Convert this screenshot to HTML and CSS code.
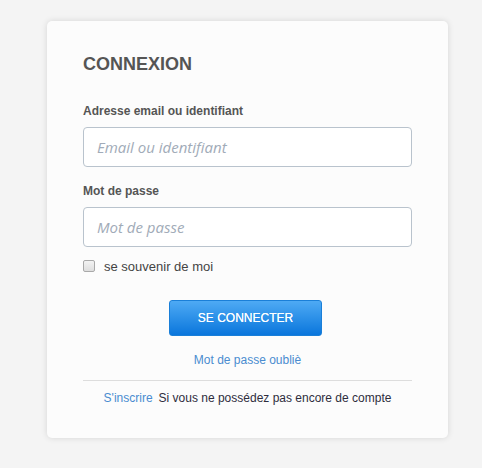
FILE: index.html
```html
<!DOCTYPE html>
<html lang="fr">
<head>
<meta charset="utf-8">
<title>Connexion</title>
<link rel="stylesheet" href="styles.css">
</head>
<body>
<div class="card">
  <h1 class="title">CONNEXION</h1>
  <label class="label" for="login">Adresse email ou identifiant</label>
  <input class="field" id="login" type="text" placeholder="Email ou identifiant">
  <label class="label label-2" for="pwd">Mot de passe</label>
  <input class="field" id="pwd" type="password" placeholder="Mot de passe">
  <label class="remember"><input type="checkbox" class="check"><span>se souvenir de moi</span></label>
  <button class="btn" type="button">SE CONNECTER</button>
  <a class="forgot" href="#">Mot de passe oubliè</a>
  <hr class="sep">
  <p class="signup"><a href="#" class="signup-link">S'inscrire</a>Si vous ne possédez pas encore de compte</p>
</div>
</body>
</html>
```
FILE: styles.css
```css
* { box-sizing: border-box; }
html, body { margin: 0; padding: 0; }
body {
  background: #f4f4f4;
  font-family: "Liberation Sans", Arial, sans-serif;
  width: 482px;
  height: 468px;
  padding: 21px 0 0 47px;
}
.card {
  width: 401px;
  height: 417px;
  background: #fcfcfc;
  border-radius: 5px;
  box-shadow: 0 0 6px rgba(0,0,0,0.13);
  padding: 32px 36px 0 36px;
  display: flex;
  flex-direction: column;
}
.title {
  margin: 0 0 29px 0;
  font-size: 18px;
  line-height: 22px;
  font-weight: bold;
  color: #555555;
}
.label {
  display: block;
  font-size: 12px;
  line-height: 15px;
  font-weight: bold;
  color: #555555;
  margin-bottom: 8px;
}
.label-2 { margin-top: 17px; }
.field {
  display: block;
  width: 100%;
  height: 40px;
  border: 1px solid #b9c3cd;
  border-radius: 4px;
  background: #ffffff;
  padding: 0 13px;
  font-family: "Open Sans", sans-serif;
  font-size: 15px;
  font-style: italic;
  color: #555;
  outline: none;
}
.field::placeholder { color: #a1abb8; font-style: italic; }
.remember {
  margin-top: 11px;
  display: flex;
  align-items: center;
  height: 16px;
  font-size: 13px;
  color: #444;
}
.check {
  appearance: none;
  -webkit-appearance: none;
  margin: 0 9px 0 0;
  width: 12px;
  height: 12px;
  border: 1px solid #a9a9a9;
  border-radius: 2px;
  background: linear-gradient(#f3f3f3, #dedede);
}
.btn {
  margin: 26px 0 0 86px;
  width: 153px;
  height: 36px;
  border: 1px solid #1a7fd8;
  border-radius: 3px;
  background: linear-gradient(#4eaaf4, #0a76dc);
  color: #ffffff;
  font-family: "Liberation Sans", Arial, sans-serif;
  font-size: 12px;
  text-shadow: 0 0 0.4px rgba(255,255,255,0.9);
  padding: 0;
}
.forgot {
  margin-top: 16px;
  align-self: center;
  font-size: 12px;
  line-height: 16px;
  color: #4a8cd0;
  text-decoration: none;
}
.sep {
  margin: 12px 0 0 0;
  border: 0;
  height: 1px;
  background: #dddddd;
}
.signup {
  margin: 9px 0 0 0;
  text-align: center;
  font-size: 12px;
  line-height: 16px;
  color: #2e2d3c;
}
.signup-link {
  color: #4a8cd0;
  text-decoration: none;
  margin-right: 6px;
}
```
